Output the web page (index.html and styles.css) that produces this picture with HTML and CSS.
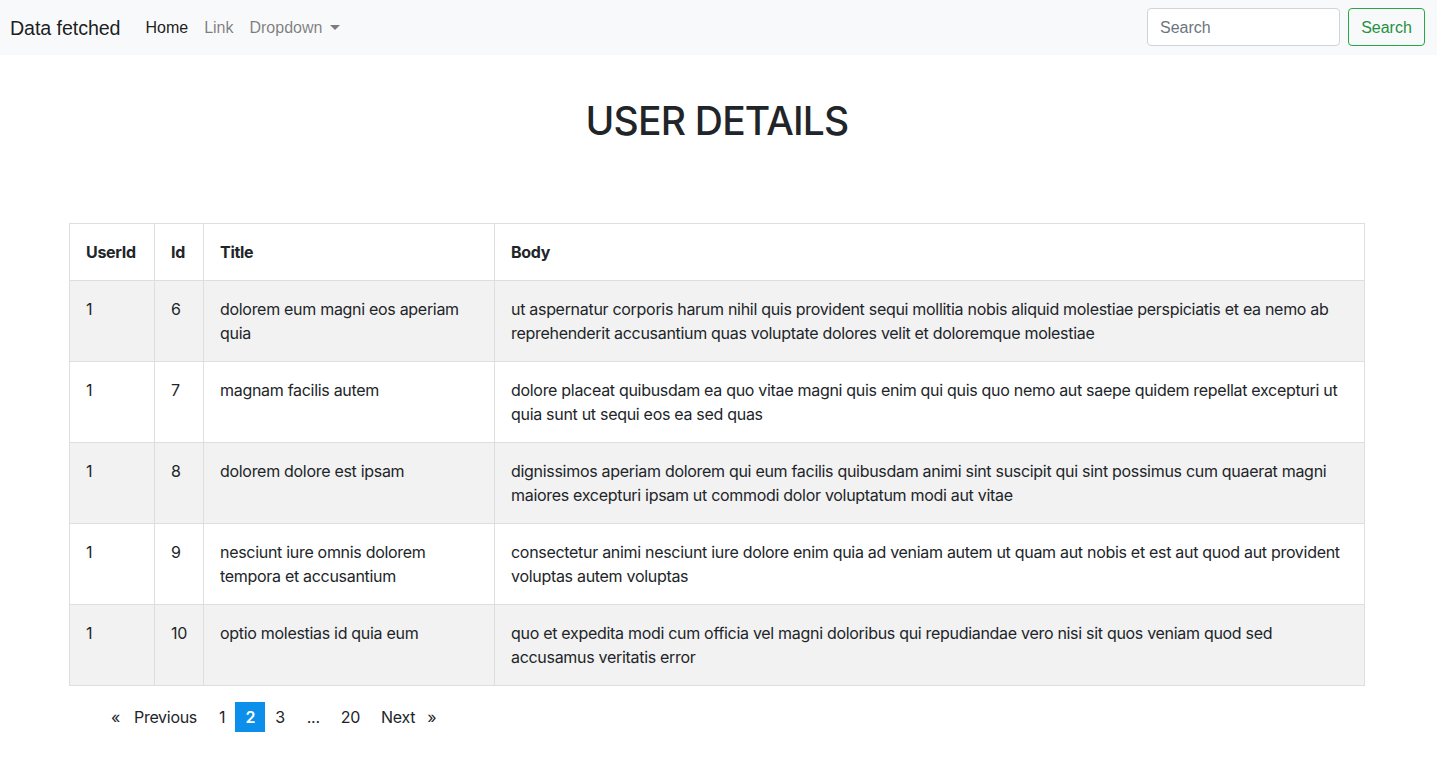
FILE: index.html
```html
<!DOCTYPE html>
<html>
<head>
<meta charset="utf-8">
<link rel="stylesheet" href="styles.css">
</head>
<body>
<nav class="navbar">
  <a class="brand">Data fetched</a>
  <ul class="nav">
    <li class="nav-link active">Home</li>
    <li class="nav-link">Link</li>
    <li class="nav-link dropdown">Dropdown<span class="caret"></span></li>
  </ul>
  <form class="search">
    <input class="search-input" type="text" placeholder="Search">
    <button class="search-btn" type="button">Search</button>
  </form>
</nav>
<main class="main">
  <h1 class="title">USER DETAILS</h1>
  <table class="table">
    <colgroup>
      <col class="c1"><col class="c2"><col class="c3"><col class="c4">
    </colgroup>
    <thead>
      <tr><th>UserId</th><th>Id</th><th>Title</th><th>Body</th></tr>
    </thead>
    <tbody>
      <tr class="odd"><td>1</td><td>6</td><td>dolorem eum magni eos aperiam quia</td><td>ut aspernatur corporis harum nihil quis provident sequi mollitia nobis aliquid molestiae perspiciatis et ea nemo ab reprehenderit accusantium quas voluptate dolores velit et doloremque molestiae</td></tr>
      <tr><td>1</td><td>7</td><td>magnam facilis autem</td><td>dolore placeat quibusdam ea quo vitae magni quis enim qui quis quo nemo aut saepe quidem repellat excepturi ut quia sunt ut sequi eos ea sed quas</td></tr>
      <tr class="odd"><td>1</td><td>8</td><td>dolorem dolore est ipsam</td><td>dignissimos aperiam dolorem qui eum facilis quibusdam animi sint suscipit qui sint possimus cum quaerat magni maiores excepturi ipsam ut commodi dolor voluptatum modi aut vitae</td></tr>
      <tr><td>1</td><td>9</td><td>nesciunt iure omnis dolorem tempora et accusantium</td><td>consectetur animi nesciunt iure dolore enim quia ad veniam autem ut quam aut nobis et est aut quod aut provident voluptas autem voluptas</td></tr>
      <tr class="odd"><td>1</td><td>10</td><td>optio molestias id quia eum</td><td>quo et expedita modi cum officia vel magni doloribus qui repudiandae vero nisi sit quos veniam quod sed accusamus veritatis error</td></tr>
    </tbody>
  </table>
  <ul class="pagination">
    <li class="page prev-arrow">«</li>
    <li class="page prev">Previous</li>
    <li class="page">1</li>
    <li class="page current">2</li>
    <li class="page">3</li>
    <li class="page ellipsis">...</li>
    <li class="page">20</li>
    <li class="page next">Next</li>
    <li class="page next-arrow">»</li>
  </ul>
</main>
</body>
</html>
```
FILE: styles.css
```css
* { box-sizing: border-box; }
html, body { margin: 0; padding: 0; }
body {
  font-family: Inter, "Noto Sans", sans-serif;
  font-size: 16px;
  line-height: 24px;
  color: #212529;
  background: #fff;
  letter-spacing: -0.3px;
}
.navbar {
  height: 55px;
  background: #f8f9fa;
  display: flex;
  align-items: center;
  padding: 0 12px 0 10px;
  font-family: "Liberation Sans", Arial, sans-serif;
  letter-spacing: 0;
}
.brand {
  font-size: 19.7px;
  color: rgba(0,0,0,.9);
  margin-right: 25px;
  letter-spacing: -0.1px;
}
.nav {
  list-style: none;
  display: flex;
  margin: 0;
  padding: 0;
  flex: 1;
}
.nav-link {
  font-size: 16px;
  color: rgba(0,0,0,.5);
  padding: 8px 8px;
}
.nav-link:first-child { padding-left: 0; }
.nav-link.active { color: rgba(0,0,0,.9); }
.caret {
  display: inline-block;
  margin-left: 8px;
  vertical-align: 3px;
  border-top: 5px solid rgba(0,0,0,.5);
  border-left: 5px solid transparent;
  border-right: 5px solid transparent;
}
.search {
  display: flex;
  gap: 8px;
  margin: 0 0 2px;
}
.search-input {
  width: 193px;
  height: 38px;
  border: 1px solid #ced4da;
  border-radius: 4px;
  padding: 7px 12px 5px;
  font: 16px "Liberation Sans", Arial, sans-serif;
  color: #495057;
  background: #fff;
}
.search-input::placeholder { color: #6c757d; }
.search-btn {
  height: 38px;
  width: 77px;
  border: 1px solid #28a745;
  border-radius: 4px;
  background: transparent;
  color: #1f9142;
  font: 16px "Liberation Sans", Arial, sans-serif;
  padding: 2px 0 0;
}
.main {
  padding: 0 72px 0 69px;
}
.title {
  margin: 42px 0 0;
  text-align: center;
  font-size: 39px;
  line-height: 48px;
  font-weight: 500;
  letter-spacing: -0.8px;
}
.table {
  margin-top: 78px;
  width: 100%;
  border-collapse: collapse;
  table-layout: fixed;
}
.c1 { width: 85px; }
.c2 { width: 49px; }
.c3 { width: 291px; }
.table th, .table td {
  border: 1px solid #dedede;
  padding: 16px;
  text-align: left;
  vertical-align: top;
}
.table th { font-weight: 700; }
.table tr.odd td { background: #f2f2f2; }
.pagination {
  list-style: none;
  display: flex;
  margin: 16px 0 0;
  padding: 0 0 0 32px;
}
.page {
  height: 30px;
  line-height: 30px;
  padding: 0 10px;
}
.prev-arrow { padding-right: 4px; }
.prev { padding-right: 12px; }
.ellipsis { padding: 0 11px 0 12px; }
.next { padding-left: 11px; padding-right: 4px; }
.next-arrow { padding-left: 8px; }
.current {
  width: 30px;
  padding: 0;
  text-align: center;
  background: #0b8fea;
  color: #fff;
  font-weight: 600;
}
```
